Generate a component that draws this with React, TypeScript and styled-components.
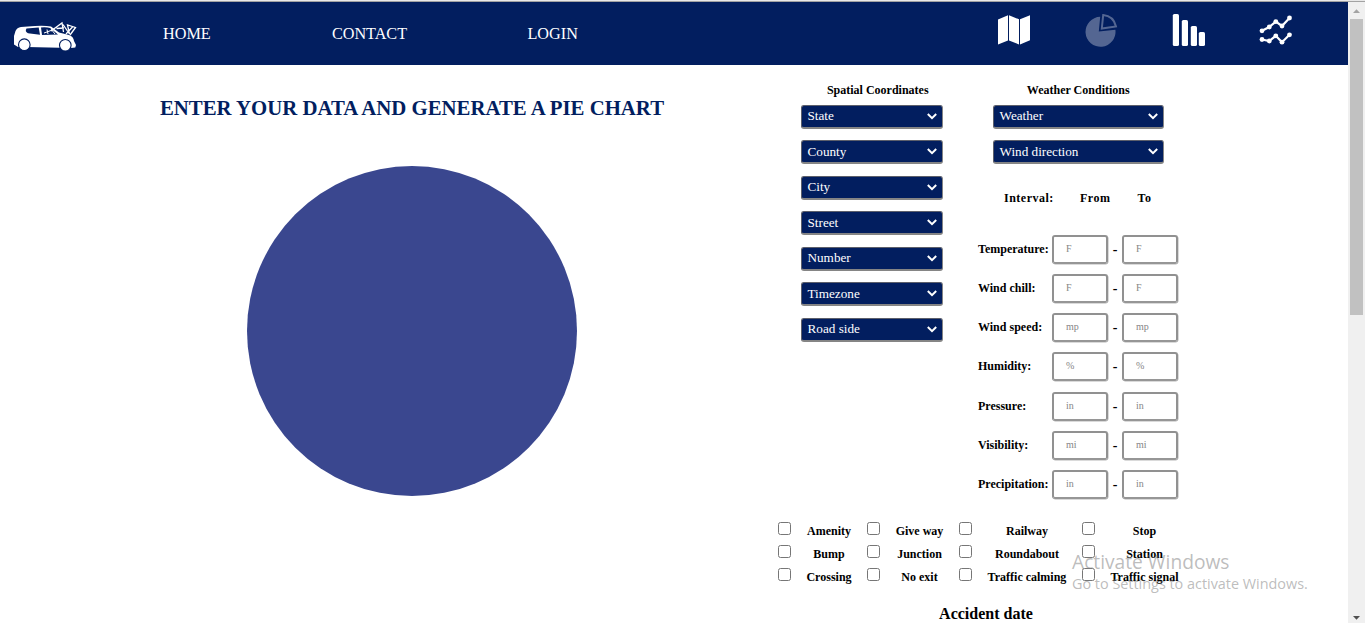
import React from "react";
import styled, { createGlobalStyle } from "styled-components";

const NAVY = "#021e5f";

const GlobalStyle = createGlobalStyle`
  *, *::before, *::after { box-sizing: border-box; }
  body {
    margin: 0;
    background: #fff;
    color: #000;
    font-family: "Liberation Serif", "Times New Roman", serif;
    overflow: hidden;
  }
`;

const Window = styled.div`
  position: relative;
  display: flex;
  flex-direction: column;
  width: 1365px;
  height: 623px;
  overflow: hidden;
  border-top: 1px solid #e9e9e9;
`;

const Viewport = styled.div`
  display: flex;
  flex: 1;
  min-height: 0;
  border-top: 1px solid #a3a3a3;
`;

const Page = styled.div`
  width: 1348px;
  overflow: hidden;
`;

const Navbar = styled.nav`
  display: flex;
  align-items: flex-start;
  height: 63px;
  background: ${NAVY};
  color: #fff;
`;

const Logo = styled.svg`
  width: 64px;
  height: 32px;
  margin: 19px 0 0 13px;
`;

const NavLinks = styled.div`
  display: grid;
  grid-template-columns: 168.9px 195.6px 60px;
  margin-left: 86px;
  padding-top: 23px;
  font-size: 16.2px;
  line-height: 19px;
`;

const NavLink = styled.a`
  color: inherit;
`;

const ChartLinks = styled.div`
  display: flex;
  gap: 53.4px;
  margin: 11px 0 0 auto;
  padding-right: 55px;
`;

const ChartIcon = styled.svg<{ $dim?: boolean }>`
  width: 34px;
  height: 34px;
  fill: #fff;
  opacity: ${(p) => (p.$dim ? 0.32 : 1)};
`;

const Main = styled.main`
  display: flex;
`;

const ChartSide = styled.section`
  display: flex;
  flex-direction: column;
  align-items: center;
  width: 778px;
  padding: 0 46px 0 92px;
`;

const Title = styled.h1`
  margin: 31px 0 0;
  font-size: 20.8px;
  line-height: 24px;
  font-weight: bold;
  color: ${NAVY};
  white-space: nowrap;
`;

const Pie = styled.div`
  width: 330px;
  height: 330px;
  margin-top: 46px;
  border-radius: 50%;
  background: #3a478f;
`;

const FormSide = styled.section`
  width: 420px;
  padding-top: 17px;
`;

const Columns = styled.div`
  display: flex;
  height: 440px;
`;

const SpatialColumn = styled.div`
  display: flex;
  flex-direction: column;
  width: 141.5px;
  margin-left: 23px;
`;

const WeatherColumn = styled.div`
  width: 201px;
  margin-left: 35.5px;
`;

const WeatherTop = styled.div`
  width: 170.5px;
  margin-left: 15px;
`;

const GroupTitle = styled.div<{ $shift?: number }>`
  height: 16px;
  margin-bottom: 6.9px;
  padding-left: ${(p) => p.$shift ?? 0}px;
  font-size: 12px;
  line-height: 16px;
  font-weight: bold;
  text-align: center;
`;

const SelectStack = styled.div`
  display: flex;
  flex-direction: column;
  gap: 11.5px;
`;

const SelectBox = styled.div`
  display: flex;
  align-items: center;
  justify-content: space-between;
  height: 24px;
  padding: 0 5px 0 5.5px;
  border: 1px solid #6d6d6d;
  border-width: 1px 1.5px 2px 1px;
  border-color: #5c5f6b #858585 #858585 #5c5f6b;
  border-radius: 3px;
  background: ${NAVY};
  color: #fff;
  font-size: 13.2px;
  line-height: 16px;
`;

const Chevron = styled.svg`
  width: 10px;
  height: 7px;
  fill: none;
  stroke: #fff;
  stroke-width: 2;
`;

const IntervalHead = styled.div`
  display: grid;
  grid-template-columns: 76px 57.5px 30px;
  margin: 26.1px 0 0 26px;
  font-size: 12px;
  line-height: 16px;
  font-weight: bold;
  letter-spacing: 0.5px;
`;

const Intervals = styled.div`
  display: flex;
  flex-direction: column;
  gap: 10.17px;
  margin-top: 28.4px;
`;

const IntervalRow = styled.div`
  display: flex;
  height: 29px;
`;

const IntervalLabel = styled.span`
  width: 74px;
  padding-top: 6px;
  font-size: 12px;
  line-height: 16px;
  font-weight: bold;
  white-space: nowrap;
`;

const Dash = styled.span`
  width: 14px;
  font-size: 14px;
  line-height: 29px;
  font-weight: bold;
  text-align: center;
`;

const Field = styled.span`
  width: 56px;
  height: 29px;
  padding-left: 12px;
  border: 2px solid #919191;
  border-bottom-color: #969696;
  border-radius: 3px;
  box-shadow: 0.5px 0.5px 0 #b5b5b5;
  color: #858585;
  font-size: 10px;
  line-height: 24px;
`;

const Checks = styled.div`
  display: grid;
  grid-template-columns: 13px 76px 13px 79px 13px 110px 13px 99px;
  grid-auto-rows: 23px;
`;

const CheckBox = styled.span`
  width: 13px;
  height: 13px;
  border: 1px solid #767676;
  border-radius: 2.5px;
  background: #fff;
`;

const CheckLabel = styled.span`
  padding-top: 1px;
  font-size: 12px;
  line-height: 16px;
  font-weight: bold;
  text-align: center;
`;

const DateTitle = styled.h2`
  margin: 13px 0 0;
  padding-right: 4px;
  font-size: 16px;
  line-height: 20px;
  text-align: center;
`;

const Scrollbar = styled.div`
  display: flex;
  flex-direction: column;
  align-items: center;
  width: 17px;
  background: #f0f0f0;
`;

const ScrollArrow = styled.svg`
  width: 17px;
  height: 17px;
`;

const ScrollThumb = styled.div`
  width: 13px;
  height: 296px;
  margin-bottom: auto;
  background: #c1c1c1;
`;

const Watermark = styled.div`
  position: absolute;
  left: 1072px;
  top: 548px;
  color: rgba(125, 125, 125, 0.52);
  font-family: "Open Sans", "Noto Sans", sans-serif;
  white-space: nowrap;
`;

const WatermarkTitle = styled.div`
  font-size: 19.2px;
  line-height: 25px;
`;

const WatermarkText = styled.div`
  font-size: 14.4px;
  line-height: 19px;
`;

const spatial = ["State", "County", "City", "Street", "Number", "Timezone", "Road side"];
const weather = ["Weather", "Wind direction"];
const intervals = [
  ["Temperature:", "F"],
  ["Wind chill:", "F"],
  ["Wind speed:", "mp"],
  ["Humidity:", "%"],
  ["Pressure:", "in"],
  ["Visibility:", "mi"],
  ["Precipitation:", "in"],
];
const checks = [
  "Amenity", "Give way", "Railway", "Stop",
  "Bump", "Junction", "Roundabout", "Station",
  "Crossing", "No exit", "Traffic calming", "Traffic signal",
];

const Select = ({ label }: { label: string }) => (
  <SelectBox>
    <span>{label}</span>
    <Chevron viewBox="0 0 10 7"><path d="M.8 1 5 5.2 9.2 1" /></Chevron>
  </SelectBox>
);

const CarLogo = () => (
  <Logo viewBox="0 0 64 32">
    <path fill="#fff" d="M1 15 2.5 10Q4 6.5 8 6L22 5Q32 4.6 38 5.4L46 11.5 56 14Q60.5 15.5 61 20L63 24 62.3 26.5 58 27 14 26 5 26 1 23.5Z" />
    <path fill={NAVY} d="M13.5 7.6 25.7 6.4 27 13.8 15 12.3Q11.5 10.5 13.5 7.6ZM28 6.4Q34 6 37 7L42 11 45 13.6 29 14Z" />
    <path d="M31 12 38 9.5M34 8.5 35 13M38 8 42 13" stroke="#fff" strokeWidth="1" fill="none" />
    <path d="M38 10 49 2 50.5 11M43.5 7.5 51 7M50 3.5 56.5 13 54.5 4 62.5 6.5 57 14M53 13 59.5 6" stroke="#fff" strokeWidth="1.3" fill="none" />
    <circle cx="11.3" cy="23.7" r="5.8" fill="#fff" stroke={NAVY} strokeWidth="1.1" />
    <circle cx="52.3" cy="24.3" r="5.8" fill="#fff" stroke={NAVY} strokeWidth="1.1" />
  </Logo>
);

export default function App() {
  return (
    <>
      <GlobalStyle />
      <Window>
        <Viewport>
          <Page>
            <Navbar>
              <CarLogo />
              <NavLinks>
                <NavLink>HOME</NavLink>
                <NavLink>CONTACT</NavLink>
                <NavLink>LOGIN</NavLink>
              </NavLinks>
              <ChartLinks>
                <ChartIcon viewBox="0 0 34 34">
                  <path d="M1 6.5 11 2.3V27.6L1 31.5ZM12 2.3 22 6.3V31.5L12 27.6ZM23 6.3 33 2.3V27.2L23 31.5Z" />
                </ChartIcon>
                <ChartIcon viewBox="0 0 34 34" $dim>
                  <path d="M16.2 3.8 14.8 18.6 31.4 16.8A15 15 0 1 1 16.2 3.8Z" />
                  <path d="M19.2 2 17.8 15.5 32 13.4Q29.5 3 19.2 2Z" fill="none" stroke="#fff" strokeWidth="2" />
                </ChartIcon>
                <ChartIcon viewBox="0 0 34 34">
                  <rect x="0.8" y="1" width="6.2" height="32" rx="1.6" />
                  <rect x="9.8" y="7" width="6.2" height="26" rx="1.6" />
                  <rect x="18.8" y="13" width="6.2" height="20" rx="1.6" />
                  <rect x="26.8" y="19" width="6.2" height="14" rx="1.6" />
                </ChartIcon>
                <ChartIcon viewBox="0 0 34 34">
                  <path d="M3 17.8 10.3 14 16.8 8.6 23 13 30.5 5M3 26.5 10.3 28 16.8 22.8 23 29.2 30.5 21.8" fill="none" stroke="#fff" strokeWidth="2.2" />
                  {[[3, 17.8], [10.3, 14], [16.8, 8.6], [23, 13], [30.5, 5], [3, 26.5], [10.3, 28], [16.8, 22.8], [23, 29.2], [30.5, 21.8]].map(([x, y]) => (
                    <circle key={`${x}-${y}`} cx={x} cy={y} r="2.4" />
                  ))}
                </ChartIcon>
              </ChartLinks>
            </Navbar>
            <Main>
              <ChartSide>
                <Title>ENTER YOUR DATA AND GENERATE A PIE CHART</Title>
                <Pie />
              </ChartSide>
              <FormSide>
                <Columns>
                  <SpatialColumn>
                    <GroupTitle $shift={12}>Spatial Coordinates</GroupTitle>
                    <SelectStack>
                      {spatial.map((s) => <Select key={s} label={s} />)}
                    </SelectStack>
                  </SpatialColumn>
                  <WeatherColumn>
                    <WeatherTop>
                      <GroupTitle $shift={-1}>Weather Conditions</GroupTitle>
                      <SelectStack>
                        {weather.map((s) => <Select key={s} label={s} />)}
                      </SelectStack>
                    </WeatherTop>
                    <IntervalHead>
                      <span>Interval:</span>
                      <span>From</span>
                      <span>To</span>
                    </IntervalHead>
                    <Intervals>
                      {intervals.map(([label, unit]) => (
                        <IntervalRow key={label}>
                          <IntervalLabel>{label}</IntervalLabel>
                          <Field>{unit}</Field>
                          <Dash>-</Dash>
                          <Field>{unit}</Field>
                        </IntervalRow>
                      ))}
                    </Intervals>
                  </WeatherColumn>
                </Columns>
                <Checks>
                  {checks.map((c) => (
                    <React.Fragment key={c}>
                      <CheckBox />
                      <CheckLabel>{c}</CheckLabel>
                    </React.Fragment>
                  ))}
                </Checks>
                <DateTitle>Accident date</DateTitle>
              </FormSide>
            </Main>
          </Page>
          <Scrollbar>
            <ScrollArrow viewBox="0 0 17 17"><path d="M5 11h7L8.5 7.2Z" fill="#a3a3a3" /></ScrollArrow>
            <ScrollThumb />
            <ScrollArrow viewBox="0 0 17 17"><path d="M5 10h7L8.5 13.8Z" fill="#505050" /></ScrollArrow>
          </Scrollbar>
        </Viewport>
        <Watermark>
          <WatermarkTitle>Activate Windows</WatermarkTitle>
          <WatermarkText>Go to Settings to activate Windows.</WatermarkText>
        </Watermark>
      </Window>
    </>
  );
}
